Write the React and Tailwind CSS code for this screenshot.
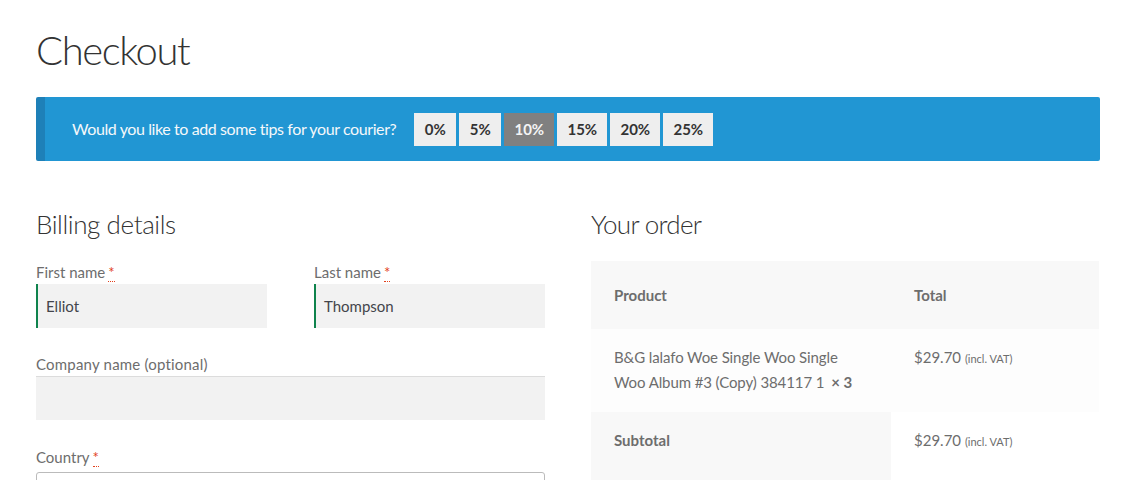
import React from "react";

const tips = ["0%", "5%", "10%", "15%", "20%", "25%"];

function Req() {
  return (
    <abbr className="text-[#e2401c] no-underline border-b border-dotted border-[#e2401c] ml-[3px] leading-none" title="required">*</abbr>
  );
}

export default function App() {
  return (
    <div className="min-h-[480px] bg-white text-[#6d6d6d]" style={{ fontFamily: "Lato, 'Noto Sans', sans-serif" }}>
      <div className="pl-[36px] w-[1100px]">
        <h1 className="pt-[24px] text-[40px] leading-[52px] font-light text-[#333333] tracking-[-1.4px]">Checkout</h1>
        <div className="mt-[21px] h-[64px] flex items-center bg-[#2196d3] border-l-[9px] border-[#1e80b8] rounded-[2px] pl-[27px]">
          <span className="text-[16px] tracking-[-0.4px] text-[#f5f8fa]">Would you like to add some tips for your courier?</span>
          <div className="ml-[18px] flex gap-[3px]">
            {tips.map((t) => (
              <div
                key={t}
                className={
                  "h-[33px] flex items-center justify-center text-[15px] font-bold " +
                  (t === "10%" ? "bg-[#808080] text-[#f4f4f4] w-[50px]" : "bg-[#eeeeee] text-[#333333] " + (t.length > 2 ? "w-[50px]" : "w-[42px]"))
                }
              >
                {t}
              </div>
            ))}
          </div>
        </div>

        <div className="mt-[46px] flex gap-[46px]">
          <div className="w-[509px]">
            <h3 className="text-[26px] leading-[34px] font-light text-[#333333] tracking-[-0.4px]">Billing details</h3>
            <div className="mt-[19px] flex gap-[47px]">
              <div className="w-[231px]">
                <label className="block text-[15px] leading-[24px]">First name<Req /></label>
                <div className="h-[44px] bg-[#f2f2f2] border-l-2 border-[#0f834d] flex items-center pl-[8px] text-[15px] text-[#43454b]">Elliot</div>
              </div>
              <div className="w-[231px]">
                <label className="block text-[15px] leading-[24px]">Last name<Req /></label>
                <div className="h-[44px] bg-[#f2f2f2] border-l-2 border-[#0f834d] flex items-center pl-[8px] text-[15px] text-[#43454b]">Thompson</div>
              </div>
            </div>
            <label className="block mt-[24px] text-[15px] leading-[24px] tracking-[0.2px]">Company name (optional)</label>
            <div className="h-[44px] bg-[#f2f2f2] border-t border-[#dcdcdc]"></div>
            <label className="block mt-[25px] text-[15px] leading-[24px]">Country<Req /></label>
            <div className="mt-[3px] h-[40px] border border-[#bbbbbb] rounded-[3px]"></div>
          </div>

          <div className="w-[508px]">
            <h3 className="text-[26px] leading-[34px] font-light text-[#333333] tracking-[-0.7px]">Your order</h3>
            <div className="mt-[20px] text-[15px]">
              <div className="flex h-[68px] bg-[#f8f8f8] items-center font-bold">
                <div className="w-[300px] pl-[23px]">Product</div>
                <div className="pl-[23px]">Total</div>
              </div>
              <div className="flex h-[83px] bg-[#fdfdfd] pt-[16px]">
                <div className="w-[300px] pl-[23px] pr-[30px] leading-[25px] tracking-[-0.1px]">
                  B&amp;G lalafo Woe Single Woo Single Woo Album #3 (Copy) 384117 1<strong className="font-bold ml-[7px]">×&nbsp;3</strong>
                </div>
                <div className="pl-[23px] leading-[25px]">
                  $29.70 <small className="text-[11px]">(incl. VAT)</small>
                </div>
              </div>
              <div className="flex h-[80px]">
                <div className="w-[300px] bg-[#f8f8f8] pl-[23px] pt-[16px] leading-[25px] font-bold">Subtotal</div>
                <div className="pl-[23px] pt-[16px] leading-[25px] bg-white">
                  $29.70 <small className="text-[11px]">(incl. VAT)</small>
                </div>
              </div>
            </div>
          </div>
        </div>
      </div>
    </div>
  );
}
